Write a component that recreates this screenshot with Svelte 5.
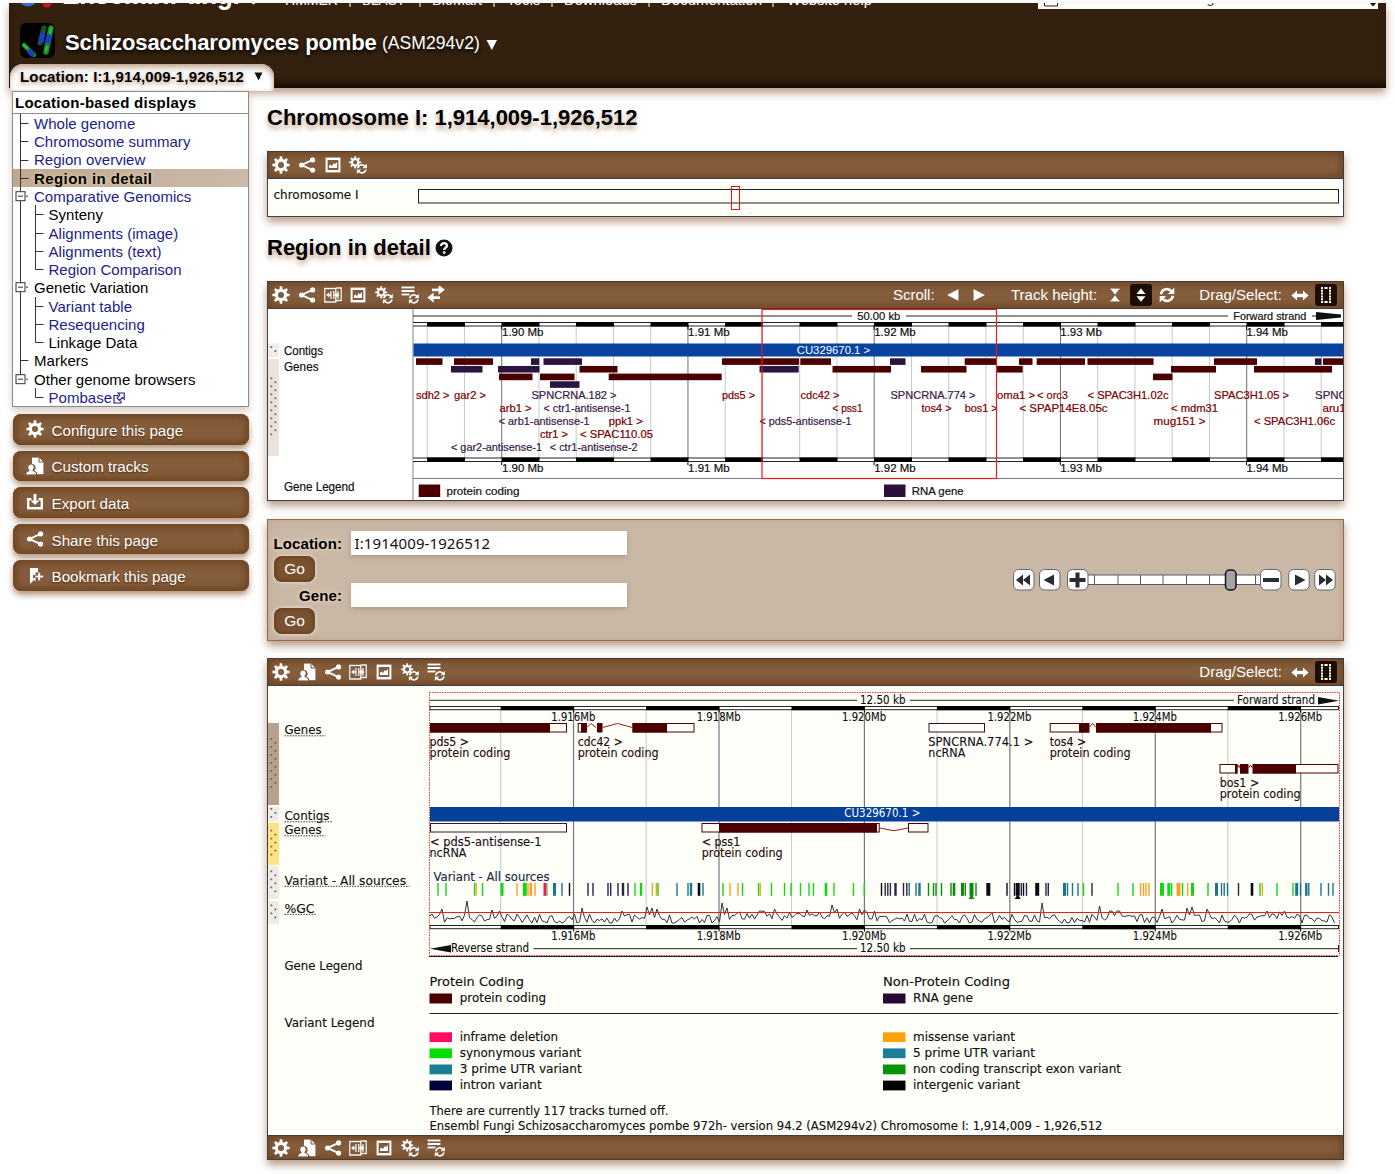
<script>
  const nav = [
    ['HMMER', 285, 53], ['BLAST', 362, 43], ['BioMart', 432, 50], ['Tools', 507, 33],
    ['Downloads', 564, 73], ['Documentation', 661, 101], ['Website help', 787, 85]
  ];
  const navBars = [350, 420, 494, 552, 649, 773];

  // level, label, kind (a = link, t = plain text, c = current), last child, branch box, trunk visible
  const tree = [
    { l: 1, s: 'Whole genome', k: 'a' },
    { l: 1, s: 'Chromosome summary', k: 'a' },
    { l: 1, s: 'Region overview', k: 'a' },
    { l: 1, s: 'Region in detail', k: 'c' },
    { l: 1, s: 'Comparative Genomics', k: 'a', box: true },
    { l: 2, s: 'Synteny', k: 't' },
    { l: 2, s: 'Alignments (image)', k: 'a' },
    { l: 2, s: 'Alignments (text)', k: 'a' },
    { l: 2, s: 'Region Comparison', k: 'a', last: true },
    { l: 1, s: 'Genetic Variation', k: 't', box: true },
    { l: 2, s: 'Variant table', k: 'a' },
    { l: 2, s: 'Resequencing', k: 'a' },
    { l: 2, s: 'Linkage Data', k: 't', last: true },
    { l: 1, s: 'Markers', k: 't' },
    { l: 1, s: 'Other genome browsers', k: 't', box: true, last: true },
    { l: 2, s: 'Pombase', k: 'a', last: true, ext: true, noTrunk: true }
  ];
  const actions = [
    ['gear', 'Configure this page'], ['user', 'Custom tracks'], ['export', 'Export data'],
    ['share', 'Share this page'], ['bookmark', 'Bookmark this page']
  ];

  const R = '#4a0000', P = '#2c1440', RT = '#7a0000', PT = '#3a1a48';
  // overview: x, end, row, colour
  const genes = [
    [416, 442.5, 0, R], [454, 493, 0, R], [531, 539.3, 0, P], [543.5, 582, 0, P], [722, 799, 0, R],
    [800.3, 831, 0, R], [890, 905.5, 0, P], [964.7, 996, 0, R], [1019, 1032.5, 0, R], [1036.7, 1085, 0, R],
    [1087.5, 1153.5, 0, R], [1214, 1257, 0, R], [1315, 1321.5, 0, P], [1323, 1343, 0, R],
    [451, 482.5, 1, P], [498, 539.5, 1, P], [579.5, 617.5, 1, R], [759.5, 798.7, 1, P], [832.5, 891, 1, R],
    [921, 966.5, 1, R], [997, 1022.7, 1, R], [1171, 1216, 1, R], [1254, 1332, 1, R],
    [499, 532.5, 2, R], [540, 574.5, 2, R], [608.7, 721.7, 2, R], [1153, 1172.5, 2, R], [550, 579.5, 3, P]
  ];
  const geneNames = [
    ['sdh2 >', 416, 0, 33.5, RT], ['gar2 >', 454, 0, 32, RT], ['SPNCRNA.182 >', 531.5, 0, 85, PT],
    ['pds5 >', 722, 0, 33, RT], ['cdc42 >', 800.5, 0, 39, RT], ['SPNCRNA.774 >', 890.5, 0, 85, PT],
    ['oma1 >', 997, 0, 38, RT], ['< orc3', 1037, 0, 31, RT], ['< SPAC3H1.02c', 1087.5, 0, 81, RT],
    ['SPAC3H1.05 >', 1214, 0, 75, RT], ['SPNCRNA', 1315, 0, 56, PT],
    ['arb1 >', 499.5, 1, 32, RT], ['< ctr1-antisense-1', 543.5, 1, 87, PT], ['< pss1', 832.5, 1, 30, RT],
    ['tos4 >', 921.5, 1, 30, RT], ['bos1 >', 964.7, 1, 33, RT], ['< SPAP14E8.05c', 1019.5, 1, 88, RT],
    ['< mdm31', 1171, 1, 47, RT], ['aru1 >', 1322.5, 1, 33, RT],
    ['< arb1-antisense-1', 498.7, 2, 91, PT], ['ppk1 >', 608.7, 2, 34, RT], ['< pds5-antisense-1', 759.5, 2, 92, PT],
    ['mug151 >', 1153.5, 2, 52, RT], ['< SPAC3H1.06c', 1254, 2, 81, RT],
    ['ctr1 >', 540, 3, 28, RT], ['< SPAC110.05', 580, 3, 73, RT],
    ['< gar2-antisense-1', 451, 4, 91, PT], ['< ctr1-antisense-2', 549.7, 4, 88, PT]
  ];
  const seq = (n) => Array.from({ length: n }, (_, i) => i);

  const G = '#10d810', O = '#ff9d1e', T = '#1b7488', U = '#2b2245', K = '#0a0a14', D = '#0a8a0a', F = '#ff1060';
  const variants = [
    [438, G], [446, G], [474.5, G], [476.2, O], [482.5, G], [502, G, 3], [517, O], [524.8, G, 4], [528, O], [530.8, O, 2.4],
    [535, O], [545, F, 3], [547, G, 1], [554.5, T, 3], [562, T], [569.5, K], [588, U], [593, U], [608, U], [610.7, U],
    [618, U], [623, U, 2.4], [628, U], [635, G], [641, G, 2.4], [652.3, O], [656.3, O], [658, G], [677, T], [688, T],
    [691, T, 2.4], [699, K, 2.6], [703, T], [723, G], [730, O], [738, O], [742.5, G], [758.5, G], [760.2, O], [771.5, G],
    [784.5, G], [791, G], [800.5, G], [809, G], [813.5, G], [826, G, 2.6], [834, G], [853.5, G], [864.3, G], [881.5, K],
    [885.2, U], [887.8, U], [890.4, U], [895.5, U, 2.4], [903.5, U], [906.8, U], [909.2, T], [916, T], [919.5, T, 2.4],
    [928.5, D], [933.5, D], [936, D], [941.5, D], [951, D], [954, D, 2.6], [962.5, D, 3], [965.3, D], [971.5, D, 4],
    [976, D], [988.3, K, 4], [1007, K], [1014.5, K], [1017.7, K, 4], [1021.3, U], [1023.5, K], [1026.5, U],
    [1037.2, K, 4], [1046, U], [1048.3, U], [1064.5, T, 3], [1067.5, T], [1072.5, T], [1078, T], [1083.5, G], [1092, U],
    [1118, G], [1133, G], [1140.5, O], [1143.5, O], [1146, O], [1149, O], [1162, G, 4], [1168.8, G, 3], [1171.6, G],
    [1178.5, O, 4], [1182.5, G], [1187.7, O], [1192.5, G, 3], [1208, G], [1216.5, T, 3], [1221.5, T], [1224.2, T],
    [1227.5, T], [1238.5, U], [1252, K, 2.6], [1260, G], [1262.3, O], [1277, G], [1293, G], [1296.7, T, 3],
    [1300.5, T], [1306.3, T, 2.4], [1308.8, T], [1321, T], [1328.5, T], [1333, T]
  ];

  // GC trace: baseline plus deterministic jitter with a handful of distinct peaks
  const peaks = { 442: 909, 467: 901, 491: 910, 500: 911, 583: 908, 622: 911, 646: 907, 652: 908, 656: 909, 723: 903, 727: 908, 775: 909, 808: 910, 832: 905, 838: 909, 859: 909, 864: 910, 874: 911, 991: 912, 1043: 903, 1099: 906, 1120: 911, 1163: 909, 1187: 908, 1192: 907, 1207: 909, 1267: 911, 1284: 911 };
  let seed = 11;
  const rnd = () => (seed = (seed * 16807) % 2147483647) / 2147483647;
  let gc = 'M430 916';
  for (let x = 432; x < 1337; x += 2.5) {
    const high = (x > 722 && x < 875) || (x > 1095 && x < 1130) || (x > 1240 && x < 1300);
    const key = Object.keys(peaks).find((k) => Math.abs(+k - x) <= 1.25);
    const y = key ? peaks[key] : (high ? 911 : 914) + rnd() * 9.5;
    gc += `L${x.toFixed(1)} ${Math.min(y, 923).toFixed(1)}`;
  }

  const variantLegend = [
    ['inframe deletion', '#ff0a64', 98.5, 'missense variant', '#ffa10f', 102],
    ['synonymous variant', '#08dc08', 121.5, '5 prime UTR variant', '#1a7f95', 122],
    ['3 prime UTR variant', '#1a7f95', 122, 'non coding transcript exon variant', '#089208', 208],
    ['intron variant', '#00003c', 82, 'intergenic variant', '#000', 107]
  ];
  const bottomTools = ['gear', 'user', 'share', 'resize', 'image', 'gearsync', 'listsync'];
</script>

{#snippet sync(x, y, s)}
  <g transform="translate({x} {y}) scale({s})" fill="none" stroke="#fff" stroke-width="2.6">
    <path d="M2 7.2A6 6 0 0 1 12.6 4.4M14 8.8A6 6 0 0 1 3.4 11.6" />
    <path d="M15.4 0.4V7H8.800z M.6 15.600V9H7.200z" fill="#fff" stroke="none" />
  </g>
{/snippet}

{#snippet cog(cx, cy, s)}
  <g transform="translate({cx} {cy}) scale({s})" fill="none" stroke="#fff">
    <circle r="4.6" stroke-width="3.2" />
    {#each seq(8) as i}
      <path d="M-1.6 -5.6L-1.3 -8.7H1.3L1.6 -5.6z" fill="#fff" stroke="none" transform="rotate({i * 45})" />
    {/each}
  </g>
{/snippet}

{#snippet icon(name)}
  <svg class="icon" width="18" height="18" viewBox="0 0 18 18">
    {#if name === 'gear'}
      {@render cog(9, 9, 1)}
    {:else if name === 'share'}
      <path d="M14.5 3.8L3.5 9l11 5.2" fill="none" stroke="#fff" stroke-width="2" />
      <circle cx="14.6" cy="3.9" r="2.6" fill="#fff" /><circle cx="3.6" cy="9" r="2.6" fill="#fff" /><circle cx="14.6" cy="14.1" r="2.6" fill="#fff" />
    {:else if name === 'image'}
      <path d="M1.5 1.5h15v15h-15zM3.700 4v10h10.600V4z" fill="#fff" fill-rule="evenodd" />
      <path d="M5 12V9.600l1.600-1 1.400 1.300 1.500-3 1.400 1L13 6v6z" fill="#fff" />
    {:else if name === 'resize'}
      <path d="M.8 2.500h11v13.500H.8zM11.800 2h5.400v12.500h-5.400" fill="none" stroke="#fff" stroke-width="1.300" />
      <path d="M7 5v8M9.800 5v8M14 5v8M3 9h4M9.800 9h5" stroke="#fff" stroke-width="1.300" />
      <path d="M2 9l3.200-2.800v5.600zM15.500 9l-3.200-2.800v5.600z" fill="#fff" />
    {:else if name === 'gearsync'}
      {@render cog(6.2, 6.3, 0.7)}
      {@render sync(7.4, 7.4, 0.68)}
    {:else if name === 'listsync'}
      <path d="M.5 1.500h13M.5 5h13M.5 8.500h8" stroke="#fff" stroke-width="2" />
      {@render sync(7.4, 7.4, 0.68)}
    {:else if name === 'swap'}
      <path d="M5 6.400V3.600h6.500V0L18 5l-6.500 5V6.400zM13 11.400v2.800H6.700V18L.2 12.800l6.500-5v3.600z" fill="#fff" transform="translate(0 -1.200)" />
    {:else if name === 'user'}
      <path d="M6 .5h7l4.500 4.500v12.300h-6.200c0-2-1.400-2.600-3-3.200 2.300-2.600 1.600-7-2.300-7.200z" fill="#fff" />
      <path d="M13 .5V5h4.500" fill="none" stroke="#77502f" stroke-width="1" />
      <path d="M5 7.600c3.400 0 3.400 4.200 1.400 5.700 0 1.300 3.800 1 3.800 4.200H.2c0-3.200 3.600-2.900 3.400-4.200C1.600 11.800 1.700 7.600 5 7.600z" fill="#fff" />
    {:else if name === 'export'}
      <path d="M5.500 5H1v11.500h16V5h-4.500v2.500H14.500V14H3.500V7.500h2z" fill="#fff" />
      <path d="M7.500 1h3v6.500h3L9 12 4.500 7.500h3z" fill="#fff" />
    {:else if name === 'bookmark'}
      <path d="M4 1h8v4.500H9.600V8H7v3h2.600v4L8 13l-4 4z" fill="#fff" />
      <path d="M13.200 5.500v8M9.200 9.500h8" stroke="#fff" stroke-width="2" />
    {:else if name === 'left'}
      <path d="M14.500 3v12L3 9z" fill="#fff" />
    {:else if name === 'right'}
      <path d="M3.500 3v12L15 9z" fill="#fff" />
    {:else if name === 'squash'}
      <path d="M4.500 3.200h9M4.500 14.800h9" stroke="#fff" stroke-width="1.600" />
      <path d="M5 3.500h8L9 8.800zM5 14.500h8L9 9.200z" fill="#fff" />
    {:else if name === 'expand'}
      <path d="M4.500 8h9L9 2.500zM4.500 10.200h9L9 15.700z" fill="#fff" />
    {:else if name === 'sync'}
      {@render sync(1, 1, 1)}
    {:else if name === 'drag'}
      <path d="M.3 9.500l5.700-5v3.300h6V4.500l5.700 5-5.700 5v-3.300H6v3.300z" fill="#fff" />
    {:else if name === 'select'}
      <path d="M5 1v16M13 1v16" fill="none" stroke="#fff" stroke-width="2" stroke-dasharray="2 .8" />
      <path d="M7 2h4M7 16h4" fill="none" stroke="#fff" stroke-width="2" stroke-dasharray=".6 2.800 .6" />
      <path d="M8 1h2v2H8zM8 15h2v2H8z" fill="#fff" />
    {/if}
  </svg>
{/snippet}

{#snippet t(s, x, y, w, fill = '#111', cls = '')}
  <text {x} {y} textLength={w} lengthAdjust="spacingAndGlyphs" {fill} class={cls}>{s}</text>
{/snippet}

{#snippet handle(y, h, fill, dots)}
  <rect x="268" {y} width="11" height={h} {fill} />
  {#each seq(dots) as i}
    <rect x={i % 2 ? 274.5 : 270.5} y={y + h / 2 - dots * 2 + i * 4} width="1.700" height="1.700" fill="#6a5e54" />
  {/each}
{/snippet}

{#snippet box(x1, x2, y, c, filled = false)}
  <rect x={x1 + 0.5} y={y + 0.5} width={x2 - x1 - 1} height="8.500" fill={filled ? c : '#fffff8'} stroke={c} />
{/snippet}

<div class="page">
  <header>
    <svg class="masthead" width="1377" height="8" viewBox="9 3 1377 8">
      <ellipse cx="28" cy="-2" rx="9" ry="8.500" fill="#2f6fe0" />
      <circle cx="47" cy="3" r="4.500" fill="#c01818" />
      <g class="brand">{@render t('EnsemblFungi', 62, 4, 178, '#fff')}</g>
      <path d="M250 2h7l-3.500 2.500z" fill="#fff" />
      {#each nav as [s, x, w]}{@render t(s, x, 4.5, w, '#fff')}{/each}
      {#each navBars as x}<path d="M{x} -6V7" stroke="#fff" />{/each}
      <rect x="1038" y="-12" width="340" height="21" fill="#fff" />
      <path d="M1044.500 -6h13v12h-13zM1048 2.500h6" fill="none" stroke="#222" />
      {@render t('Search Ensembl Fungi…', 1072, 3, 160, '#444')}
      <path d="M1369 2h8l-4 4.500z" fill="#111" />
    </svg>
    <div class="species">
      <svg width="35" height="35" viewBox="0 0 35 35">
        <rect width="35" height="35" rx="6" fill="#020202" />
        <g fill="none" stroke-linecap="round">
          <path d="M31 5L26 29" stroke="#1b8a2a" stroke-width="5.500" /><path d="M24 5L20 20" stroke="#125a2a" stroke-width="5" />
          <path d="M4 22L14 32" stroke="#1b8a2a" stroke-width="4.500" />
          <path d="M29 14l-1 4M22.500 12l-1 6M10 29l2 2" stroke="#1c3ccc" stroke-width="5" />
          <path d="M31 5l-1 5M27 24l-1 4M4 22l3 3" stroke="#35c23c" stroke-width="2" />
        </g>
      </svg>
      <b>Schizosaccharomyces pombe</b><span>(ASM294v2)</span>
      <svg width="12" height="12" viewBox="0 0 12 12"><path d="M.5 1h10.500L5.800 11z" fill="#fff" /></svg>
    </div>
    <div class="tab"><b>Location: I:1,914,009-1,926,512</b>
      <svg width="9" height="9" viewBox="0 0 9 9"><path d="M.5 .5h8L4.500 8.500z" fill="#111" /></svg>
    </div>
  </header>

  <div class="columns">
    <aside>
      <div class="menu">
        <h4>Location-based displays</h4>
        {#each tree as n}
          <div class="node" class:current={n.k === 'c'}>
            <svg width={n.l === 1 ? 21 : 35.5} height="18.270" viewBox="0 0 {n.l === 1 ? 21 : 35.5} 18.270">
              <g fill="none" stroke="#333">
                {#if !n.noTrunk}<path d="M7.500 0V{n.last && n.l === 1 ? 9 : 19}" />{/if}
                {#if n.box}
                  <rect x="3" y="4.700" width="9" height="9" fill="#fff" /><path d="M5 9.200h5M13 9.200h2" />
                {:else if n.l === 1}
                  <path d="M7.500 9.500h8" />
                {:else}
                  <path d="M22.500 0V{n.last ? 9.5 : 19}M22.500 9.500h8" />
                {/if}
              </g>
            </svg>
            <span class:link={n.k === 'a'}>{n.s}</span>
            {#if n.ext}
              <svg class="ext" width="12" height="12" viewBox="0 0 12 12"><path d="M5 3.500H1v7.500h7V8.500" fill="none" stroke="#1c1c8c" stroke-width="1.200" /><path d="M5 1h6.200v6.200L9.300 5.500 6.500 8.500 4 6l2.800-3z" fill="#fff" stroke="#1c1c8c" stroke-width="1.100" /></svg>
            {/if}
          </div>
        {/each}
      </div>
      {#each actions as [ic, label]}
        <button class="action">{@render icon(ic)}<span>{label}</span></button>
      {/each}
    </aside>

    <main>
      <h1>Chromosome I: 1,914,009-1,926,512</h1>
      <section class="panel">
        <div class="bar">{@render icon('gear')}{@render icon('share')}{@render icon('image')}{@render icon('gearsync')}</div>
        <svg class="plot dv" width="1075" height="37" viewBox="268 179 1075 37">
          {@render t('chromosome I', 273.5, 198.5, 85)}
          <rect x="418.500" y="189.500" width="920" height="13.500" fill="#fffffa" stroke="#222" />
          <rect x="731.500" y="186.500" width="8" height="23" fill="none" stroke="#e11" />
        </svg>
      </section>

      <h2>Region in detail
        <svg width="18" height="18" viewBox="0 0 18 18"><circle cx="9" cy="9" r="8.500" fill="#111" /><path d="M6 7c0-4 6.300-3.800 6 0C11.800 8.700 9.200 8.700 9.200 11" fill="none" stroke="#fff" stroke-width="2.200" /><circle cx="9.200" cy="13.600" r="1.300" fill="#fff" /></svg>
      </h2>

      <section class="panel">
        <div class="bar">
          {#each ['gear', 'share', 'resize', 'image', 'gearsync', 'listsync', 'swap'] as n}{@render icon(n)}{/each}
          <span class="grow"></span>
          <span class="lab">Scroll:</span>{@render icon('left')}{@render icon('right')}
          <span class="lab sep">Track height:</span>{@render icon('squash')}<i class="on">{@render icon('expand')}</i>{@render icon('sync')}
          <span class="lab sep">Drag/Select:</span>{@render icon('drag')}<i class="on">{@render icon('select')}</i>
        </div>
        <svg class="plot ar white" width="1075" height="191" viewBox="268 309 1075 191">
          {@render handle(343.5, 13.5, '#f1ece8', 2)}
          {@render handle(359, 97, '#e9e1da', 15)}
          <g class="side">
            {@render t('Contigs', 284, 355, 39)}{@render t('Genes', 284, 370.5, 34.5)}{@render t('Gene Legend', 284, 490.5, 70.5)}
          </g>
          {#each seq(25) as i}
            <rect x={426.7 + i * 37.25} y="327" width="1" height="131" fill={i % 5 === 2 ? '#6b7074' : '#c3cacb'} />
          {/each}
          <path d="M413 309V500M413 478.500H1343" stroke="#7c8084" fill="none" />
          <path d="M413 316H852M906 316H1228M1312 316h8" stroke="#222" />
          <path d="M1316 312v8l25-2.500v-3z" fill="#111" />
          {@render t('50.00 kb', 857.3, 320, 43)}{@render t('Forward strand', 1233.3, 320, 73)}
          {#each [322.5, 458] as y}
            <rect x="413" {y} width="931" height="3.500" fill="#fff" /><path d="M413 {y}h931M413 {y + 3.5}h931" stroke="#222" />
            {#each seq(13) as i}<rect x={427 + i * 74.5} y={y - 0.5} width="38" height="4.500" fill="#000" />{/each}
            {#each seq(5) as i}
              <path d="M{501.7 + i * 186.2} {y + 3}v4" stroke="#000" />
              {@render t(`1.9${i} Mb`, 502 + i * 186.1, y + 13.5, 41.5)}
            {/each}
          {/each}
          <rect x="413.500" y="343.500" width="930" height="13" fill="#0843a0" />
          {@render t('CU329670.1 >', 796.7, 354, 73.5, '#fff', 'inv')}
          {#each genes as [a, b, r, c]}<rect x={a} y={358.3 + r * 7.65} width={b - a} height="6.600" fill={c} />{/each}
          {#each geneNames as [s, x, r, w, c]}{@render t(s, x, 399.3 + r * 13, w, c, c === RT ? 'rt' : 'pt')}{/each}
          <rect x="762" y="309.500" width="234.500" height="169" fill="none" stroke="#f01818" stroke-width="1.200" />
          <rect x="418.700" y="484.500" width="21.500" height="12.500" fill={R} />{@render t('protein coding', 446.5, 495.3, 73)}
          <rect x="884" y="484.500" width="21.500" height="12.500" fill="#2d1036" />{@render t('RNA gene', 911.7, 495.3, 52)}
        </svg>
      </section>

      <section class="panel form">
        <div class="fields">
          <label for="loc">Location:</label><input id="loc" value="I:1914009-1926512" />
          <button class="go">Go</button>
          <label for="gene">Gene:</label><input id="gene" value="" />
          <button class="go">Go</button>
        </div>
        <svg class="zoomer" width="324" height="26" viewBox="1012 567 324 26">
          <rect x="1085" y="575" width="180" height="9.500" fill="#fff" stroke="#5c5c60" />
          {#each [1094.5, 1118, 1140.5, 1163, 1186.5, 1209.5, 1255.5] as x}<path d="M{x} 575v9.500" stroke="#5c5c60" />{/each}
          {#each [1013.5, 1039.5, 1067.5, 1260.5, 1288.7, 1314.7] as x}
            <rect {x} y="569.500" width="20.500" height="20.500" rx="5" fill="#fff" stroke="#66666c" />
          {/each}
          <g fill="#2c2b33">
            <path d="M1023 574.500v11l-7-5.500zM1030 574.500v11l-7-5.500zM1054 574.500v11l-10.500-5.500zM1295 574.500v11l10.500-5.500zM1319 574.500v11l7-5.500zM1326 574.500v11l7-5.500z" />
            <path d="M1075.500 572.500h4v5.500h6v4h-6v5.500h-4V582h-6v-4h6zM1263 578h16v4h-16z" />
          </g>
          <rect x="1225.500" y="570" width="10.500" height="20" rx="4" fill="#a3a3a5" stroke="#141418" stroke-width="1.500" />
        </svg>
      </section>

      <section class="panel">
        <div class="bar">
          {#each bottomTools as n}{@render icon(n)}{/each}
          <span class="grow"></span>
          <span class="lab">Drag/Select:</span>{@render icon('drag')}<i class="on">{@render icon('select')}</i>
        </div>
        <svg class="plot dv" width="1075" height="449" viewBox="268 686 1075 449">
          {@render handle(723, 82, '#b8a08c', 13)}
          {@render handle(807, 14, '#efebe8', 3)}
          {@render handle(822.5, 42.5, '#fce483', 7)}
          {@render handle(866, 33, '#efebe8', 6)}
          {@render handle(901, 23, '#efebe8', 4)}
          {#each [['Genes', 734, 37, 41], ['Contigs', 820, 45, 48], ['Genes', 834, 37, 41], ['Variant - All sources', 884.5, 121.5, 125], ['%GC', 912.5, 30, 32]] as [s, y, w, u]}
            {@render t(s, 284.5, y, w)}
            <path d="M284.500 {y + 1.8}h{u}" stroke="#334" stroke-dasharray="1.500 1.200" />
          {/each}
          {@render t('Gene Legend', 284.5, 969.5, 78)}{@render t('Variant Legend', 284.5, 1026.5, 90)}

          {#each seq(12) as i}
            <rect x={500.2 + i * 72.72} y="710" width={i % 2 ? 1.2 : 1} height="216" fill={i % 2 ? '#74767e' : '#c4c6ca'} />
          {/each}
          <path d="M430 700.300H857M910 700.300H1234M533.500 948.700H857M910 948.700H1338M1338.500 945v7" stroke="#222" fill="none" />
          {@render t('12.50 kb', 860, 704, 45.5)}{@render t('Forward strand', 1237, 704, 78)}
          {@render t('12.50 kb', 860, 952, 45.5)}{@render t('Reverse strand', 451, 952, 78)}
          <path d="M1318 697v7.500l21-3.700zM451 945v7.500l-21-3.700z" fill="#111" />
          {#each [706.5, 925.5] as y}
            <rect x="430" {y} width="908.500" height="3.200" fill="#fff" stroke="#222" />
            {#each seq(6) as i}
              <rect x={500.7 + i * 145.4} y={y - 0.5} width="73" height="4.200" fill="#000" />
              <path d="M{573.7 + i * 145.38} {y}v6" stroke="#000" />
              {@render t(`1.9${16 + i * 2}Mb`, 551.3 + i * 145.38, y + 14.2, 44)}
            {/each}
          {/each}

          {@render box(430, 567, 723, R)}{@render box(430, 550, 723, R, true)}
          {@render box(577.7, 587, 723, R)}{@render box(581, 586.5, 723, R, true)}{@render box(597, 602.5, 723, R, true)}
          {@render box(632.5, 694.5, 723, R)}{@render box(632.5, 667, 723, R, true)}
          {@render box(928.5, 985, 723, '#2c1430')}
          {@render box(1049.7, 1222.5, 723, R)}{@render box(1079, 1211, 723, R, true)}
          <rect x="1089.500" y="722.500" width="6.500" height="10.500" fill="#fffff8" />
          {@render box(1219.5, 1338.5, 764, R)}{@render box(1235, 1296, 764, R, true)}
          <rect x="1237.700" y="763.500" width="2.300" height="10.500" fill="#fffff8" /><rect x="1248.500" y="763.500" width="4" height="10.500" fill="#fffff8" />
          <path d="M587 727.500l4-4 5 4M602.500 727.500l15-4 15 4M1089 727.500l3.500-4 3.500 4M1237.500 768l1.200-3 1.300 3M1248.500 768l2-3 2 3M879.500 828l14.500 2.700 14-2.700" fill="none" stroke="#a01818" />
          {@render box(430, 567, 823, '#3a1430')}
          {@render box(701.5, 879.7, 823, R)}{@render box(719, 877, 823, R, true)}{@render box(908, 928.5, 823, R)}

          {#each [['pds5 >', 429.5, 745.5, 39.5], ['cdc42 >', 577.7, 745.5, 45], ['tos4 >', 1049.7, 745.5, 36.5], ['bos1 >', 1219.7, 786.5, 39.5]] as [s, x, y, w]}
            {@render t(s, x, y, w, '#2d0a0a')}{@render t('protein coding', x, y + 11.7, 81, '#2d0a0a')}
          {/each}
          {@render t('< pss1', 701.7, 845.5, 38.5, '#2d0a0a')}{@render t('protein coding', 701.7, 857.2, 81, '#2d0a0a')}
          {@render t('SPNCRNA.774.1 >', 928.3, 745.5, 105, '#1c1024')}{@render t('ncRNA', 928.3, 757, 37, '#1c1024')}
          {@render t('< pds5-antisense-1', 430, 845.5, 111.5, '#1c1024')}{@render t('ncRNA', 429.5, 857, 37, '#1c1024')}

          <rect x="430" y="807" width="909" height="14.500" fill="#05409a" />
          {@render t('CU329670.1 >', 844.3, 816.5, 76, '#fff', 'inv')}
          {@render t('Variant - All sources', 433.5, 881, 116, '#23304e')}
          {#each variants as [x, c, w = 1.4]}<rect x={x - w / 2} y="883" width={w} height="12.800" fill={c} />{/each}
          <path d="M971.500 894l3 5h-6z" fill={D} /><path d="M1017.700 894l3 5h-6z" fill={K} />
          <path d={gc} fill="none" stroke="#2c3634" stroke-width="1" />
          <path d="M430 912.500H1339" stroke="#ee1c1c" stroke-width="1.200" />
          <rect x="429.500" y="692.500" width="910" height="263" fill="none" stroke="#f43a3a" stroke-dasharray="1.500 1" />
          <path d="M429 956.500H1338" stroke="#222" />

          <g class="big">{@render t('Protein Coding', 429.5, 986, 94.5)}{@render t('Non-Protein Coding', 883, 986, 127)}</g>
          <rect x="429.500" y="993.500" width="22.500" height="10" fill={R} />{@render t('protein coding', 459.7, 1002, 86.5)}
          <rect x="883" y="993.500" width="22.500" height="10" fill="#240a34" />{@render t('RNA gene', 913, 1002, 60)}
          <path d="M429.500 1013.500H1338.500" stroke="#222" />
          {#each variantLegend as [a, ac, aw, b, bc, bw], i}
            <rect x="429.500" y={1032.3 + i * 16.1} width="22.500" height="9.800" fill={ac} />{@render t(a, 459.7, 1040.7 + i * 16.1, aw)}
            <rect x="883" y={1032.3 + i * 16.1} width="22.500" height="9.800" fill={bc} />{@render t(b, 913, 1040.7 + i * 16.1, bw)}
          {/each}
          {@render t('There are currently 117 tracks turned off.', 429.5, 1114.7, 239)}
          {@render t('Ensembl Fungi Schizosaccharomyces pombe 972h- version 94.2 (ASM294v2) Chromosome I: 1,914,009 - 1,926,512', 429.5, 1129.7, 673)}
        </svg>
        <div class="bar foot">{#each bottomTools as n}{@render icon(n)}{/each}</div>
      </section>
    </main>
  </div>
</div>

<style>
  :global(body) { margin: 0; background: #fff; }
  * { box-sizing: border-box; }
  .page { width: 1395px; height: 1174px; padding-top: 3px; overflow: hidden; font-family: "Liberation Sans", Arial, sans-serif; font-size: 15px; color: #111; }
  svg { display: block; flex: none; }
  header { margin: 0 9px; height: 85px; background: #33200f; box-shadow: 0 5px 8px rgba(150, 105, 75, .65), inset 0 -7px 7px -3px #150800; }
  .masthead { overflow: hidden; font-size: 14.5px; }
  .brand { font-size: 29px; font-weight: bold; }
  .species { display: flex; align-items: center; height: 35px; margin-top: 12px; padding-left: 11px; color: #fff; text-shadow: 0 2px 4px #000; }
  .species b { font-size: 22px; margin: 4px 0 0 10px; letter-spacing: -.1px; width: 312px; white-space: nowrap; }
  .species span { font-size: 17.6px; margin: 6px 6px 0 5px; }
  .species svg:last-child { margin-top: 8px; }
  .tab { display: flex; align-items: center; gap: 10px; width: 264px; height: 27px; margin: 6px 0 0 1px; padding: 0 0 3px 10px; background: #fff; border-radius: 13px 13px 0 0; box-shadow: inset 0 5px 7px -2px #b79c88, inset -2px 0 4px -1px #d8c8bc; font-size: 15px; color: #000; }
  .tab b { text-shadow: 0 2px 5px #b08a70; white-space: nowrap; letter-spacing: .15px; }
  .columns { display: flex; gap: 18px; padding: 3px 0 0 12px; }
  aside { width: 237px; display: flex; flex-direction: column; }
  .menu { border: 1px solid #8b8b8b; height: 316px; background: #fff; box-shadow: 0 4px 7px rgba(150, 110, 80, .35); margin-bottom: 7px; }
  h4 { margin: 0; height: 22px; line-height: 22px; padding-left: 2px; font-size: 15px; color: #000; border-bottom: 1px solid #8b8b8b; letter-spacing: .27px; }
  .node { display: flex; align-items: center; height: 18.27px; line-height: 19px; white-space: nowrap; color: #000; }
  .node span { letter-spacing: .03px; padding-top: .6px; }
  .node .link { color: #1c1c8c; }
  .ext { margin: 2px 0 0 1px; }
  .current { background: linear-gradient(90deg, #c0a890, #cbbaa9); text-shadow: 0 0 4px #f4dfb0; }
  .current span { font-weight: bold; letter-spacing: .42px; }
  button { font-family: inherit; border: 0; color: #fff; }
  .action { display: flex; align-items: center; gap: 8px; height: 30.6px; width: 236px; margin: 0 0 6px .5px; padding: 0 0 0 13px; border-radius: 8px; font-size: 15.2px; background: #855e3d; box-shadow: inset 0 0 9px 3px #6c4320, 0 4px 6px rgba(130, 80, 40, .6); text-shadow: 0 1px 2px #4a2a10; }
  .action span { padding-top: 2px; }
  main { width: 1077px; }
  h1, h2 { margin: 0; font-size: 22px; color: #000; text-shadow: 0 4px 5px rgba(170, 125, 90, .7); white-space: nowrap; }
  h1 { height: 60px; line-height: 54px; }
  h2 { height: 64px; line-height: 60px; padding-bottom: 3px; display: flex; align-items: center; gap: 4px; }
  .panel { border: 1px solid #3c4046; background: #fffffa; box-shadow: 0 5px 8px rgba(150, 105, 75, .65); width: 1077px; }
  .bar { display: flex; align-items: center; height: 27px; padding: 0 4px; gap: 7.8px; background: #855e3d; box-shadow: inset 0 0 9px 2px #6c4320; border-bottom: 1px solid #3c4046; color: #fff; font-size: 15px; }
  .icon { filter: drop-shadow(0 0 .5px #3a2008); }
  .grow { flex: 1; }
  .lab { margin-right: 1.5px; padding-bottom: 1px; }
  .sep { margin-left: 15.5px; }
  .on { display: flex; justify-content: center; width: 22px; height: 22px; align-items: center; background: #1c0c02; border-radius: 3px; margin: 0 -2px; }
  .on:last-child { margin-right: 2px; }
  .plot { width: 1075px; overflow: hidden; }
  .white { background: #fff; }
  .dv { font: 11.5px "DejaVu Sans", Verdana, sans-serif; }
  .dv text { stroke: #111; stroke-width: .15px; }
  .ar { font: 10.5px "Liberation Sans", Arial, sans-serif; }
  .ar text { stroke: #111; stroke-width: .2px; }
  .ar .rt { stroke: #7a0000; }
  .ar .pt { stroke: #3a1a48; }
  .ar .inv, .dv .inv { stroke: none; }
  .ar .side text { font-size: 12px; }
  .big { font-size: 12.8px; }
  .form { display: flex; justify-content: space-between; height: 122px; margin: 18px 0 17px; background: #cab8a6; border-color: #8f6b48; box-shadow: 0 5px 8px rgba(150, 105, 75, .65), inset 0 0 10px #bda48e; }
  .fields { display: grid; grid-template-columns: 69px 276px; column-gap: 8.5px; grid-template-rows: 25px 27px 25px 27px; padding: 11px 0 0 5px; align-content: start; }
  label { font-weight: bold; color: #000; text-align: right; align-self: center; letter-spacing: .1px; text-shadow: 0 0 5px #ffe9cf; }
  input { width: 276px; height: 24px; border: 0; padding: 0 4px; font: 15px "Noto Sans", "Open Sans", sans-serif; letter-spacing: .1px; color: #111; background: #fff; box-shadow: 0 2px 5px rgba(120, 80, 50, .3); }
  .go { grid-column: 1 / 3; width: 41px; height: 26px; margin-left: 1px; border-radius: 8px; background: #7a5230; font-size: 15.5px; box-shadow: inset 0 0 5px #5c3514, 0 0 4px #f3e6d8; padding: 0; }
  .zoomer { margin: 47px 7px 0 0; }
  .foot { height: 24px; border: 0; border-top: 1px solid #3c4046; }
</style>
